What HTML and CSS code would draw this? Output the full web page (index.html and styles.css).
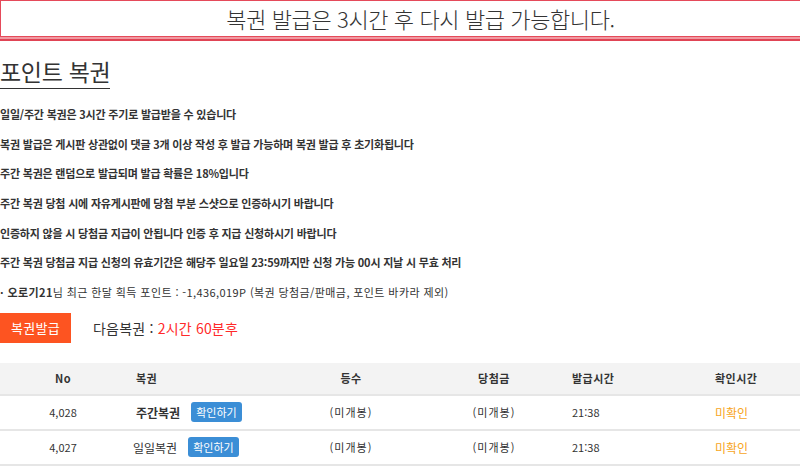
FILE: index.html
```html
<!DOCTYPE html>
<html lang="ko">
<head>
<meta charset="utf-8">
<title>포인트 복권</title>
<link rel="stylesheet" href="styles.css">
</head>
<body>
<div class="banner">복권 발급은 3시간 후 다시 발급 가능합니다.</div>
<div class="page">
  <h1 class="title">포인트 복권</h1>
  <div class="notes">
    <p class="note">일일/주간 복권은 3시간 주기로 발급받을 수 있습니다</p>
    <p class="note">복권 발급은 게시판 상관없이 댓글 3개 이상 작성 후 발급 가능하며 복권 발급 후 초기화됩니다</p>
    <p class="note">주간 복권은 랜덤으로 발급되며 발급 확률은 18%입니다</p>
    <p class="note">주간 복권 당첨 시에 자유게시판에 당첨 부분 스샷으로 인증하시기 바랍니다</p>
    <p class="note">인증하지 않을 시 당첨금 지급이 안됩니다 인증 후 지급 신청하시기 바랍니다</p>
    <p class="note">주간 복권 당첨금 지급 신청의 유효기간은 해당주 일요일 23:59까지만 신청 가능 00시 지날 시 무효 처리</p>
    <p class="stat"><b>· 오로기21</b>님 최근 한달 획득 포인트 : -1,436,019P (복권 당첨금/판매금, 포인트 바카라 제외)</p>
  </div>
  <div class="actions">
    <button class="issue">복권발급</button>
    <span class="next">다음복권 : <span class="remain">2시간 60분후</span></span>
  </div>
  <div class="table">
    <div class="row head">
      <div class="c c1">No</div>
      <div class="c c2">복권</div>
      <div class="c c3">등수</div>
      <div class="c c4">당첨금</div>
      <div class="c c5">발급시간</div>
      <div class="c c6">확인시간</div>
    </div>
    <div class="row">
      <div class="c c1">4,028</div>
      <div class="c c2"><b class="weekly">주간복권</b><button class="check">확인하기</button></div>
      <div class="c c3 sealed">(미개봉)</div>
      <div class="c c4 sealed">(미개봉)</div>
      <div class="c c5">21:38</div>
      <div class="c c6 unchecked">미확인</div>
    </div>
    <div class="row">
      <div class="c c1">4,027</div>
      <div class="c c2"><span class="daily">일일복권</span><button class="check">확인하기</button></div>
      <div class="c c3 sealed">(미개봉)</div>
      <div class="c c4 sealed">(미개봉)</div>
      <div class="c c5">21:38</div>
      <div class="c c6 unchecked">미확인</div>
    </div>
  </div>
</div>
</body>
</html>
```
FILE: styles.css
```css
html, body {
  margin: 0;
  padding: 0;
  background: #fff;
  overflow: hidden;
}
body {
  font-family: "Noto Sans CJK KR", "Noto Sans", sans-serif;
  color: #333;
  width: 800px;
}
.banner {
  width: 840px;
  height: 37px;
  box-sizing: border-box;
  border: 1px solid #e54a5a;
  border-right: none;
  box-shadow: 0 2px 0 #f09aa2, 0 4px 0 #e04455;
  text-align: center;
  font-size: 22px;
  font-weight: 300;
  line-height: 35px;
  color: #333;
  letter-spacing: -0.4px;
}
.page {
  padding-top: 17px;
}
.title {
  display: inline-block;
  margin: 0;
  font-size: 23px;
  font-weight: 400;
  letter-spacing: -0.3px;
  line-height: 34px;
  padding-bottom: 0;
  border-bottom: 1px solid #333;
  color: #333;
}
.notes {
  margin-top: 11px;
}
.note, .stat {
  margin: 0;
  height: 29.7px;
  line-height: 29.7px;
  font-size: 11px;
  font-weight: 700;
  white-space: nowrap;
  letter-spacing: -0.2px;
}
.stat {
  font-weight: 400;
  letter-spacing: 0.4px;
}
.stat b {
  font-weight: 700;
}
.actions {
  margin-top: 5px;
  display: flex;
  align-items: center;
  height: 30px;
}
.issue {
  width: 71px;
  height: 30px;
  border: none;
  margin: 0;
  padding: 0;
  background: #fd5421;
  color: #fff;
  font-family: inherit;
  font-size: 13px;
  letter-spacing: 0.3px;
}
.next {
  margin-left: 22px;
  font-size: 14px;
  color: #333;
  letter-spacing: 0.2px;
}
.remain {
  color: #ff2a2a;
}
.table {
  margin-top: 20px;
  width: 820px;
}
.row {
  display: grid;
  grid-template-columns: 126px 126px 198px 88px 143px 1fr;
  box-sizing: border-box;
  height: 35px;
  align-items: center;
  border-bottom: 2px solid #e6e6e6;
  font-size: 11px;
}
.row.head {
  height: 33px;
  background: #f3f3f3;
  font-weight: 700;
  font-size: 11px;
  letter-spacing: 0.5px;
}
.c1, .c3, .c4 {
  text-align: center;
}
.c2 {
  padding-left: 10px;
  display: flex;
  align-items: center;
}
.c5, .c6 {
  padding-left: 34px;
}
.sealed {
  letter-spacing: 1px;
}
.weekly {
  font-weight: 700;
  font-size: 12px;
}
.daily {
  font-size: 12px;
  margin-left: -3px;
}
.check {
  margin-left: 11px;
  height: 20px;
  padding: 0 5px;
  border: none;
  border-radius: 3px;
  background: #3b8ed6;
  color: #fff;
  font-family: inherit;
  font-size: 11px;
  line-height: 20px;
}
.unchecked {
  color: #f7a51c;
  font-size: 12px;
}
```
